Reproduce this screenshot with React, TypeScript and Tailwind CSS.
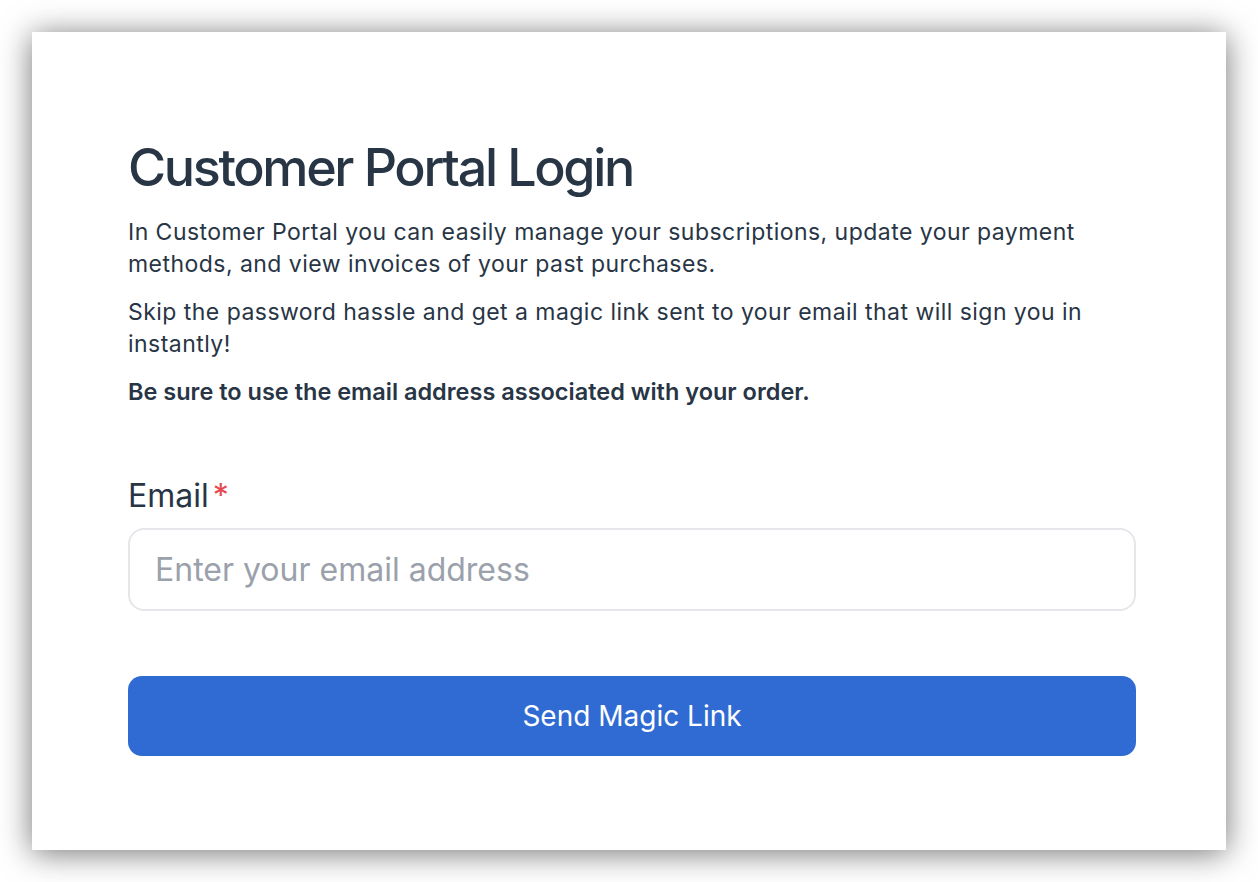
export default function App() {
  return (
    <div className="min-h-screen bg-white p-[32px]" style={{ fontFamily: "Inter, 'Noto Sans', sans-serif" }}>
      <div className="flex h-[818px] w-[1194px] flex-col bg-white pl-[96px] pr-[90px] pt-[104px] shadow-[0_3px_30px_rgba(0,0,0,0.55)]">
        <h1 className="text-[52px] leading-[64px] font-medium tracking-[-0.045em] text-[#283545]">
          Customer Portal Login
        </h1>
        <p className="mt-4 text-[23px] leading-[32px] tracking-[0.02em] text-[#283545]">
          In Customer Portal you can easily manage your subscriptions, update your payment methods, and view invoices of
          your past purchases.
        </p>
        <p className="mt-4 text-[23px] leading-[32px] tracking-[0.02em] text-[#283545]">
          Skip the password hassle and get a magic link sent to your email that will sign you in instantly!
        </p>
        <p className="mt-4 text-[23.5px] leading-[32px] font-semibold text-[#283545]">
          Be sure to use the email address associated with your order.
        </p>

        <label className="mt-[68px] flex items-center text-[32px] leading-[40px] text-[#283545]">
          Email<span className="ml-1 text-[#e5484d]">*</span>
        </label>
        <input
          type="email"
          placeholder="Enter your email address"
          className="mt-3 h-[83px] w-full rounded-2xl border-2 border-[#e5e7eb] bg-white px-[25px] text-[32px] text-[#283545] outline-none placeholder:text-[#9aa1ab]"
        />

        <button className="mt-[65px] h-[80px] w-full rounded-[14px] bg-[#2f6bd3] text-[28px] text-white">
          Send Magic Link
        </button>
      </div>
    </div>
  );
}
